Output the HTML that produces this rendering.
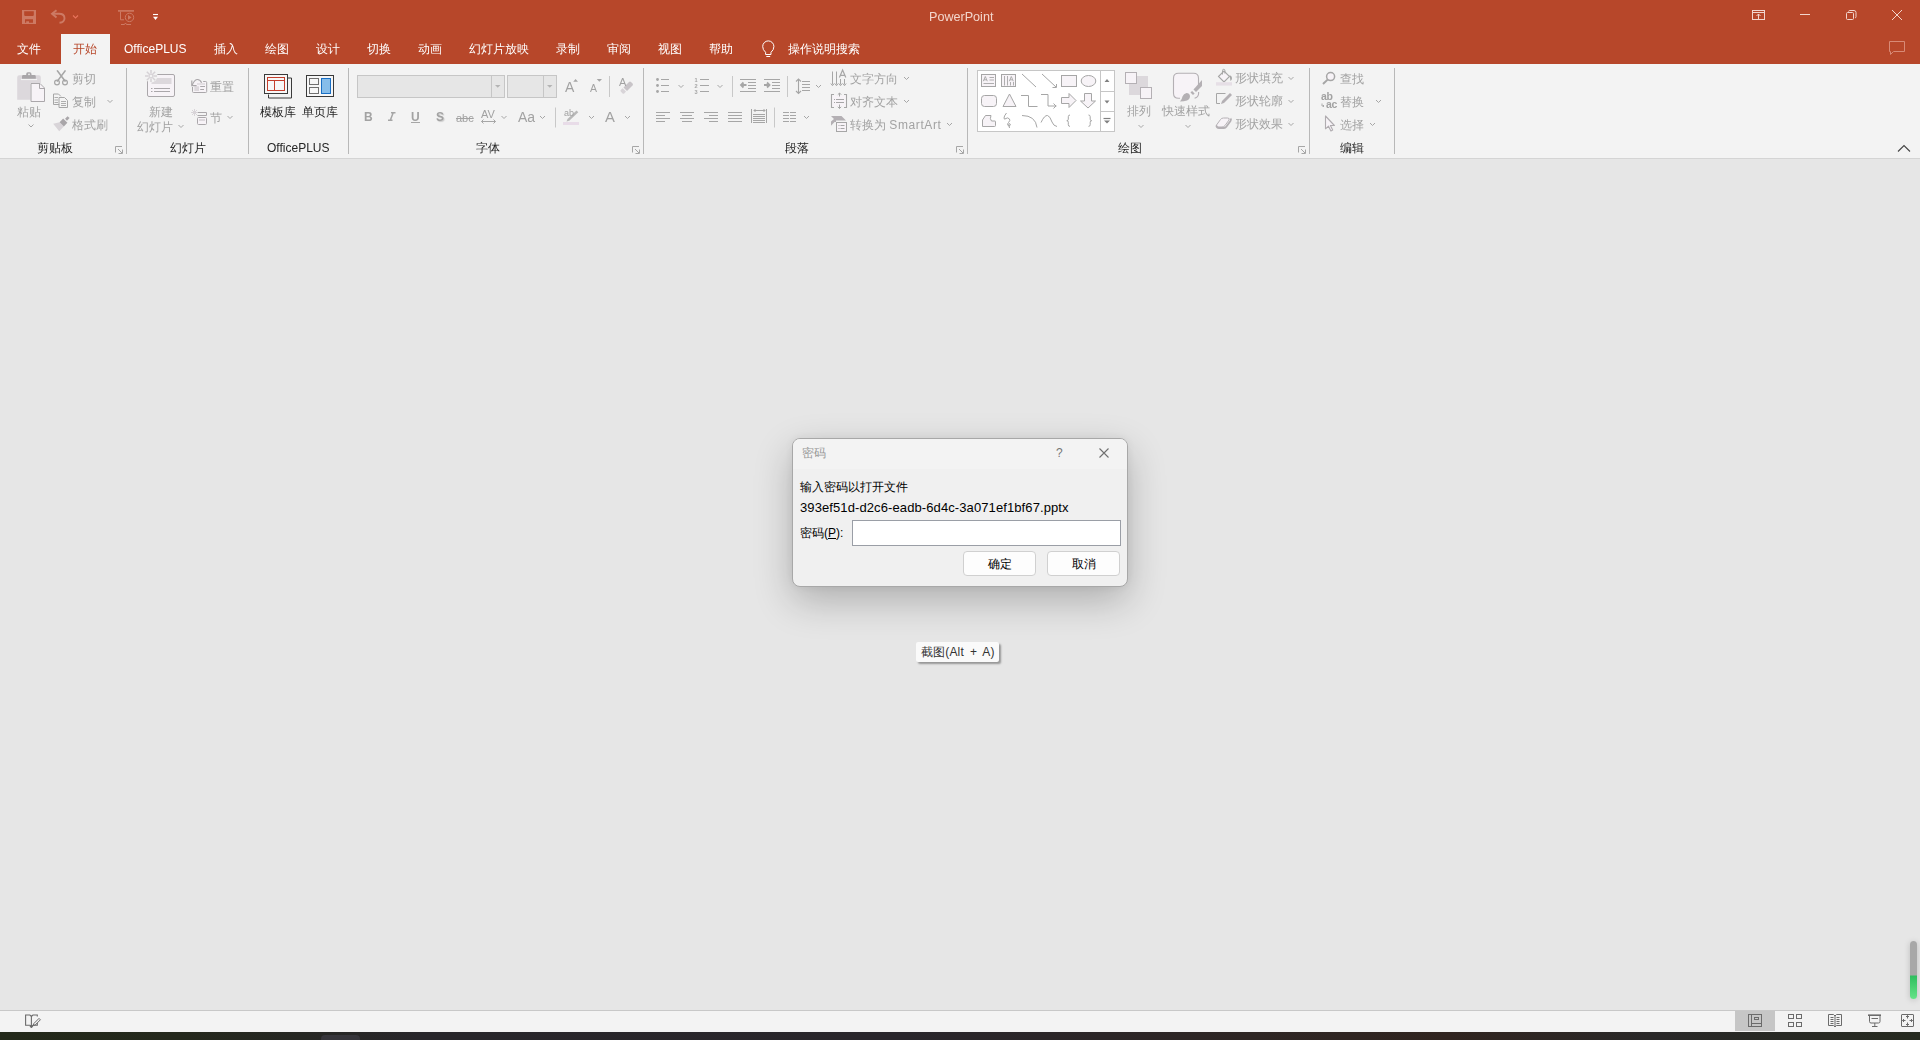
<!DOCTYPE html>
<html><head><meta charset="utf-8">
<style>
*{margin:0;padding:0;box-sizing:border-box}
html,body{width:1920px;height:1040px;overflow:hidden;background:#e6e6e6;font-family:"Liberation Sans",sans-serif;font-size:12px;color:#262626;font-weight:500}
.abs{position:absolute}
#title{left:0;top:0;width:1920px;height:64px;background:#b7472a}
#ribbon{left:0;top:64px;width:1920px;height:95px;background:#f3f3f3;border-bottom:1px solid #d4d4d4}
#status{left:0;top:1010px;width:1920px;height:22px;background:#f3f3f3;border-top:1px solid #c8c8c8}
#taskbar{left:0;top:1032px;width:1920px;height:8px;background:linear-gradient(90deg,#23291a 0,#24281c 180px,#28262a 420px,#29262b 900px,#2e2624 1250px,#30241f 1450px,#292828 1650px,#262a20 1920px)}
.tab{position:absolute;top:34px;height:30px;line-height:30px;color:#fff;font-size:12px;white-space:nowrap}
.t{position:absolute;white-space:nowrap}
.sep{position:absolute;top:68px;width:1px;height:86px;background:#b8b8b8}
.glabel{position:absolute;top:140px;height:16px;line-height:16px;font-size:12px;color:#262626;white-space:nowrap}
.dis{color:#a2a2a2}
.tab,.glabel,.t{will-change:transform}
.dlg .t{will-change:auto}
</style></head><body>
<div id="title" class="abs"></div>
<div class="t" style="left:929px;top:9px;color:#f3d6cc;font-size:12.6px;line-height:16px">PowerPoint</div>
<!-- QAT -->
<svg class="abs" style="left:0;top:0" width="170" height="32">
 <g fill="none" stroke="#d9917f" stroke-linecap="butt">
  <path d="M22 10 h14 v14 h-14 z M24.2 11.3 h9.6 v4 l-.8 .8 h-8 l-.8 -.8 z M25 19.2 h8 v3.5 h-4 v-1.5 h-2.8 v1.5 h-1.2 z" fill="#cd7a64" fill-rule="evenodd" stroke="none"/>
  <path d="M52.5 13.8 h6.5 q5.5 0 5.5 4.5 q0 4 -5 4.5" stroke="#cd7a64" stroke-width="1.9"/>
  <path d="M56.5 10.2 l-4.5 3.6 l4.5 3.8" stroke="#cd7a64" stroke-width="1.9"/>
  <path d="M73 15.5 l2.5 2.5 l2.5 -2.5" stroke="#e8745c" stroke-width="1.1"/>
  <path d="M118 10.9 h16" stroke="#cd7a64" stroke-width="1.6"/>
  <path d="M120.5 11.5 v8.3 h3.5 M121 24.5 h3.5 M126.5 24.5 h4.5 M124.5 24.5 l1 -1.5 l1 1.5" stroke="#cd7a64" stroke-width="1"/>
  <circle cx="129.5" cy="17.4" r="4.2" stroke="#cd7a64" stroke-width="1"/>
  <path d="M128 15 v4.8 l3.6 -2.4 z" fill="#cd7a64" stroke="none"/>
 </g>
 <path d="M153 14.5 h5" stroke="#fff" stroke-width="1.1"/>
 <path d="M153 16.8 h5 l-2.5 3.2 z" fill="#fff"/>
</svg>
<!-- window controls -->
<svg class="abs" style="left:1740px;top:0" width="180" height="64" viewBox="1740 0 180 64">
 <g fill="none" stroke="#f2d5cd" stroke-width="1">
  <rect x="1752.5" y="10.5" width="12" height="9"/>
  <path d="M1753 12.5 h11 M1758.5 19 v-5 M1756.5 16 l2 -2 l2 2"/>
  <path d="M1800 14.5 h10"/>
  <rect x="1846.5" y="12.5" width="7" height="7" rx="1"/><path d="M1848.5 11.5 q.2 -1 1.3 -1 h4.2 q2 0 2 2 v4.2 q0 1.1 -1 1.3"/>
  <path d="M1892 10 l10 10 M1902 10 l-10 10"/>
  <path d="M1889.5 41.5 h15 v10 h-11 l-3 3 v-3 h-1 z" stroke="#d88a76"/>
 </g>
</svg>
<!-- tabs -->
<div class="tab" style="left:17px">文件</div>
<div class="abs" style="left:61px;top:34px;width:49px;height:30px;background:#f3f3f3"></div>
<div class="tab" style="left:73px;color:#b7472a">开始</div>
<div class="tab" style="left:124px">OfficePLUS</div>
<div class="tab" style="left:214px">插入</div>
<div class="tab" style="left:265px">绘图</div>
<div class="tab" style="left:316px">设计</div>
<div class="tab" style="left:367px">切换</div>
<div class="tab" style="left:418px">动画</div>
<div class="tab" style="left:469px">幻灯片放映</div>
<div class="tab" style="left:556px">录制</div>
<div class="tab" style="left:607px">审阅</div>
<div class="tab" style="left:658px">视图</div>
<div class="tab" style="left:709px">帮助</div>
<svg class="abs" style="left:760px;top:38px" width="18" height="22" viewBox="760 38 18 22"><g fill="none" stroke="#fff" stroke-width="1"><path d="M765.6 52.3 q-2.9 -2.4 -2.9 -5.8 a5.6 5.6 0 0 1 11.2 0 q0 3.4 -2.9 5.8 v2.2 h-5.4 z"/><path d="M766.3 56.5 h3.9"/></g></svg>
<div class="tab" style="left:788px">操作说明搜索</div>

<div id="ribbon" class="abs"></div>
<div class="sep" style="left:126px"></div>
<div class="sep" style="left:248px"></div>
<div class="sep" style="left:348px"></div>
<div class="sep" style="left:643px"></div>
<div class="sep" style="left:967px"></div>
<div class="sep" style="left:1309px"></div>
<div class="sep" style="left:1394px"></div>
<div class="glabel" style="left:37px">剪贴板</div>
<!-- G1 clipboard -->
<svg class="abs" style="left:0;top:64px" width="127" height="95" viewBox="0 64 127 95">
 <g fill="none" stroke-linecap="square">
  <path d="M17.2 99.7 v-22.5 q0 -2 2 -2 h19.8 q1.8 0 1.8 2 v5.8 h-10 v16.7 z" fill="#dcd8dc"/>
  <path d="M21.5 79.5 h15" stroke="#f3f3f3" stroke-width="1.2"/>
  <path d="M22 78.7 v-2.2 q0 -1.4 1.4 -1.4 h2.8 v-1.2 q0 -1.7 1.7 -1.7 h1.9 q1.7 0 1.7 1.7 v1.2 h2.8 q1.5 0 1.5 1.4 v2.2 z" fill="#a9a6a9"/>
  <rect x="28.2" y="73.6" width="1.6" height="1.5" fill="#f3f3f3"/>
  <path d="M30.5 83 h1 v19.3 h-1 z" fill="#f3f3f3"/>
  <path d="M31.5 83.5 h8.5 l4.5 4.5 v13.5 h-13 z" fill="#f7f3f7" stroke="#aaa7aa" stroke-width="1"/>
  <path d="M39.5 83.5 v5 h5" stroke="#aaa7aa"/>
    <!-- scissors -->
  <path d="M57.5 71 l7.5 10 M65 71 l-7.5 10" stroke="#a6a6a6" stroke-width="1.6"/>
  <circle cx="57" cy="82.5" r="2.4" stroke="#a6a6a6" stroke-width="1.2"/>
  <circle cx="65" cy="82.5" r="2.4" stroke="#a6a6a6" stroke-width="1.2"/>
  <!-- copy -->
  <path d="M59 104.5 h-5.5 v-10.5 h5 l2 2" stroke="#a6a6a6"/>
  <path d="M55 97.5 h2.5 M55 100 h2.5 M55 102.5 h2.5" stroke="#a6a6a6" stroke-width=".9"/>
  <path d="M59.5 97.5 h5 l3 3 v7 h-8 z" stroke="#a6a6a6" fill="#f3f3f3"/>
  <path d="M61.5 101.5 h4 M61.5 103.5 h4 M61.5 105.5 h4" stroke="#a6a6a6" stroke-width=".9"/>
  <!-- brush -->
  <path d="M59.6 122.2 l-6.4 1.6 l6 7.4 l4.6 -4.8 z" fill="#d8d4d8"/>
  <path d="M67.4 122.85 L63.15 118.6 L59.6 122.15 L63.85 126.4 z" fill="#a9a6a9"/>
  <path d="M69.56 118.12 L67.58 116.14 L65.04 118.68 L67.02 120.66 z" fill="#a9a6a9"/>
    <!-- chevrons -->
  <path d="M28.5 124.5 l2.5 2.5 l2.5 -2.5" stroke="#a6a6a6" stroke-linecap="butt"/>
  <path d="M107.5 100 l2.5 2.5 l2.5 -2.5" stroke="#a6a6a6" stroke-linecap="butt"/>
  <!-- launcher -->
  <path d="M115.5 152.5 v-6 h6.5 M118 149 l4 4 M118.5 153.5 h4 v-4" stroke="#a6a6a6" stroke-linecap="butt"/>
 </g>
</svg>
<div class="t dis" style="left:17px;top:104px;line-height:16px">粘贴</div>
<div class="t dis" style="left:72px;top:71px;line-height:16px">剪切</div>
<div class="t dis" style="left:72px;top:94px;line-height:16px">复制</div>
<div class="t dis" style="left:72px;top:117px;line-height:16px">格式刷</div>
<!-- G2 slides -->
<svg class="abs" style="left:127px;top:64px" width="122" height="95" viewBox="127 64 122 95">
 <g fill="none" stroke-linecap="butt">
  <rect x="147.5" y="74.5" width="27" height="22" rx="1.5" fill="#f7f3f7" stroke="#aaa7aa"/>
  <rect x="151.5" y="78" width="20" height="6" fill="#dcd8dc"/>
  <path d="M151 88.5 h1.5 M154 88.5 h16 M151 91.5 h1.5 M154 91.5 h16" stroke="#aaa7aa"/>
  <circle cx="151" cy="76" r="6.5" fill="#f3f3f3"/>
  <g stroke="#d6d2d6" stroke-width="1.5"><path d="M151 70 v3.6 M151 78.4 v3.6 M145 76 h3.6 M153.4 76 h3.6 M146.8 71.8 l2.5 2.5 M152.7 77.7 l2.5 2.5 M155.2 71.8 l-2.5 2.5 M149.3 77.7 l-2.5 2.5"/></g>
  <circle cx="151" cy="76" r="1.9" fill="none" stroke="#d6d2d6" stroke-width="1.1"/>
  <!-- reset -->
  <path d="M193.2 92 h13 v-10.5 h-12.5 v10.5 z" fill="#f7f3f7" stroke="none"/>
  <path d="M192.5 87 v4.5 q0 1 1 1 h12.2 q1 0 1 -1 v-9 q0 -1 -1 -1 h-2.5" stroke="#aaa7aa" stroke-width="1"/>
  <rect x="197" y="83" width="8" height="2" fill="#e3dfe3" stroke="none"/>
  <rect x="194.3" y="86.3" width="4.7" height="4.7" fill="#dcd8dc" stroke="none"/>
  <path d="M200.2 86.5 h4.8 M200.2 89.5 h3.8" stroke="#aaa7aa" stroke-width="1"/>
  <path d="M201.6 82.8 q-1.5 -3.6 -4.6 -3.3 q-2.6 .3 -4.8 5.6" stroke="#aaa7aa" stroke-width="1.2"/>
  <path d="M191.8 80.5 v5.2 h4.8" stroke="#aaa7aa" stroke-width="1.2"/>
  <!-- section -->
  <path d="M197.5 112.5 h9 v3 h-9" stroke="#aaa7aa"/>
  <rect x="197.5" y="117.5" width="9" height="7" rx="1" fill="#f7f3f7" stroke="#aaa7aa"/>
  <rect x="199" y="119" width="6" height="2" fill="#dcd8dc"/>
  <g stroke="#d8d4d8"><path d="M194.5 109 v7 M191 112.5 h7 M192 110 l5 5 M197 110 l-5 5"/></g>
  <path d="M178.5 125 l2.5 2.5 l2.5 -2.5" stroke="#a6a6a6"/>
  <path d="M227.5 116 l2.5 2.5 l2.5 -2.5" stroke="#a6a6a6"/>
 </g>
</svg>
<div class="t dis" style="left:149px;top:104px;line-height:16px">新建</div>
<div class="t dis" style="left:137px;top:119px;line-height:16px">幻灯片</div>
<div class="t dis" style="left:210px;top:79px;line-height:16px">重置</div>
<div class="t dis" style="left:210px;top:110px;line-height:16px;letter-spacing:0">节</div>
<!-- G3 OfficePLUS -->
<svg class="abs" style="left:249px;top:64px" width="99" height="95" viewBox="249 64 99 95">
 <g fill="none" stroke-linecap="butt">
  <path d="M268.5 94.5 v3.5 h23 v-20 h-3.5" stroke="#3a3a3a"/>
  <rect x="264.5" y="74.5" width="23" height="19" fill="#f7f7f7" stroke="#3a3a3a"/>
  <rect x="267.5" y="77.5" width="17" height="13" fill="#f7f7f7" stroke="#c43e2c"/>
  <path d="M267.5 80.5 h17 M274.5 80.5 v10" stroke="#c43e2c"/>
  <rect x="306.5" y="75.5" width="27" height="21" fill="#f7f7f7" stroke="#3a3a3a"/>
  <rect x="309.5" y="78.5" width="9" height="6" fill="#f7f7f7" stroke="#707070"/>
  <rect x="309.5" y="87.5" width="9" height="6" fill="#f7f7f7" stroke="#707070"/>
  <rect x="321.5" y="78.5" width="9" height="15" fill="#86bdea" stroke="#1a6fc4"/>
 </g>
</svg>
<div class="t" style="left:260px;top:104px;line-height:16px">模板库</div>
<div class="t" style="left:302px;top:104px;line-height:16px">单页库</div>
<div class="glabel" style="left:170px">幻灯片</div>
<div class="glabel" style="left:267px">OfficePLUS</div>
<div class="glabel" style="left:476px">字体</div>
<!-- G4 font -->
<svg class="abs" style="left:349px;top:64px" width="294" height="95" viewBox="349 64 294 95">
 <g fill="none" stroke-linecap="butt">
  <rect x="357.5" y="75.5" width="147" height="22" fill="#e6e6e6" stroke="#c6c6c6"/>
  <path d="M491.5 76 v21" stroke="#c6c6c6"/>
  <path d="M495 85 h5.5 l-2.75 2.75 z" fill="#b4b4b4"/>
  <rect x="507.5" y="75.5" width="49" height="22" fill="#e6e6e6" stroke="#c6c6c6"/>
  <path d="M543.5 76 v21" stroke="#c6c6c6"/>
  <path d="M547 85 h5.5 l-2.75 2.75 z" fill="#b4b4b4"/>
  <path d="M609.5 76 v21" stroke="#c8c8c8"/>
  <path d="M555.5 107.5 v20" stroke="#c8c8c8"/>
  <!-- grow/shrink -->
  <path d="M573.2 81.8 l2.4 -2.8 l2.4 2.8 z M596.7 79 h5.3 l-2.65 2.8 z" fill="#a6a6a6"/>
  <!-- clear formatting -->
  <path d="M623.5 87.5 l5.5 -5.5 q1 -1 2 0 l1.5 1.5 q1 1 0 2 l-5.5 5.5 z" fill="#c8c4c8"/>
  <path d="M620.8 90 l1.8 -1.8 l3.4 3.4 l-1.8 1.8 q-.8 .8 -1.6 0 l-1.8 -1.8 q-.8 -.8 0 -1.6 z" fill="#d8d4d8"/>
  <!-- underline -->
  <path d="M411 122.5 h9" stroke="#a6a6a6"/>
  <!-- AV arrow -->
  <path d="M481.5 121.5 h14 M483.5 119.5 l-2 2 l2 2 M493.5 119.5 l2 2 l-2 2" stroke="#a6a6a6"/>
  <!-- highlight pen -->
  <path d="M566.5 121.5 l1 -2.5 l9 -8.5 l1.8 1.8 l-9 8.5 z" fill="#b8b8b8"/>
  <rect x="563" y="122" width="16" height="3" fill="#e8dce8"/>
  <!-- chevrons -->
  <path d="M501.5 116 l2.5 2.5 l2.5 -2.5 M540 116 l2.5 2.5 l2.5 -2.5 M589 116 l2.5 2.5 l2.5 -2.5 M625 116 l2.5 2.5 l2.5 -2.5" stroke="#a6a6a6"/>
  <path d="M632.5 152.5 v-6 h6.5 M635 149 l4 4 M635.5 153.5 h4 v-4" stroke="#a6a6a6"/>
 </g>
</svg>
<div class="t dis" style="left:565px;top:80px;font-size:14px;line-height:14px">A</div>
<div class="t dis" style="left:590px;top:83px;font-size:10.5px;line-height:11px">A</div>
<div class="t dis" style="left:618.5px;top:77px;font-size:11px;line-height:11px">A</div>
<div class="t dis" style="left:364px;top:110px;font-size:12px;line-height:14px;font-weight:bold">B</div>
<svg class="abs" style="left:386px;top:110px" width="12" height="13" viewBox="386 110 12 13"><path d="M391 112.7 h4.5 M388 120.3 h4.5 M393.2 112.7 l-2.9 7.6" stroke="#a6a6a6" stroke-width="1.5" fill="none"/></svg>
<div class="t dis" style="left:411px;top:110px;font-size:12px;line-height:14px;font-weight:bold">U</div>
<div class="t dis" style="left:436px;top:110px;font-size:12px;line-height:14px;font-weight:bold;text-shadow:1px 1px 1px #ccc">S</div>
<div class="t dis" style="left:456px;top:111px;font-size:11px;line-height:14px;text-decoration:line-through">abc</div>
<div class="t dis" style="left:481px;top:109px;font-size:11px;line-height:11px">AV</div>
<div class="t dis" style="left:518px;top:110px;font-size:14px;line-height:14px">Aa</div>
<div class="t dis" style="left:564px;top:109px;font-size:9px;line-height:9px">ab</div>
<div class="t dis" style="left:605px;top:108.5px;font-size:14.8px;line-height:16px">A</div>
<!-- G5 paragraph -->
<svg class="abs" style="left:644px;top:64px" width="325" height="95" viewBox="644 64 325 95">
 <g fill="none" stroke="#a6a6a6" stroke-linecap="butt">
  <!-- bullets -->
  <circle cx="657.5" cy="79.5" r="1.4" fill="#a6a6a6" stroke="none"/>
  <circle cx="657.5" cy="85.5" r="1.4" fill="#a6a6a6" stroke="none"/>
  <circle cx="657.5" cy="91.5" r="1.4" fill="#a6a6a6" stroke="none"/>
  <path d="M661 79.5 h8 M661 85.5 h8 M661 91.5 h8"/>
  <path d="M678.5 85 l2.5 2.5 l2.5 -2.5 M717.5 85 l2.5 2.5 l2.5 -2.5 M816 85 l2.5 2.5 l2.5 -2.5 M904 77 l2.5 2.5 l2.5 -2.5 M904 100 l2.5 2.5 l2.5 -2.5 M947 123 l2.5 2.5 l2.5 -2.5 M804 116 l2.5 2.5 l2.5 -2.5"/>
  <!-- numbering -->
  <path d="M700 79.5 h9 M700 85.5 h9 M700 91.5 h9"/>
  <text x="694.6" y="81.8" font-size="5.6" font-weight="bold" fill="#a6a6a6" stroke="none" font-family="Liberation Sans">1</text>
  <text x="694.6" y="87.8" font-size="5.6" font-weight="bold" fill="#a6a6a6" stroke="none" font-family="Liberation Sans">2</text>
  <text x="694.6" y="93.8" font-size="5.6" font-weight="bold" fill="#a6a6a6" stroke="none" font-family="Liberation Sans">3</text>
  <path d="M732.5 76 v21 M787.5 76 v21 M774.5 107.5 v20" stroke="#c8c8c8"/>
  <!-- indent -->
  <path d="M740 79.5 h16 M748 82.5 h8 M748 85.5 h8 M748 88.5 h8 M740 91.5 h16"/>
  <path d="M746.5 85 h-5 M743.5 82.5 l-2.5 2.5 l2.5 2.5" stroke-width="1.8"/>
  <path d="M764 79.5 h16 M772 82.5 h8 M772 85.5 h8 M772 88.5 h8 M764 91.5 h16"/>
  <path d="M764 85 h5 M767 82.5 l2.5 2.5 l-2.5 2.5" stroke-width="1.8"/>
  <!-- line spacing -->
  <path d="M802 81.5 h8 M802 84.5 h8 M802 87.5 h8 M802 90.5 h8"/>
  <path d="M798.5 79 v14.5 M796 81.5 l2.5 -2.5 l2.5 2.5 M796 91 l2.5 2.5 l2.5 -2.5" stroke-width="1.1"/>
  <!-- align -->
  <path d="M656 112.5 h14 M656 115.5 h9 M656 118.5 h14 M656 121.5 h9"/>
  <path d="M680 112.5 h14 M682 115.5 h10 M680 118.5 h14 M682 121.5 h10"/>
  <path d="M704 112.5 h14 M709 115.5 h9 M704 118.5 h14 M709 121.5 h9"/>
  <path d="M728 112.5 h14 M728 115.5 h14 M728 118.5 h14 M728 121.5 h14"/>
  <path d="M751.5 109 v14 M766.5 109 v14 M753 114.5 h12 M753 116.5 h12 M753 118.5 h12 M753 120.5 h12 M753 122.5 h12 M754 110.5 h11 M755.5 109 l-1.5 1.5 l1.5 1.5 M763.5 109 l1.5 1.5 l-1.5 1.5"/>
  <!-- columns -->
  <path d="M783 112.5 h6 M783 115.5 h6 M783 118.5 h6 M783 121.5 h6 M790 112.5 h6 M790 115.5 h6 M790 118.5 h6 M790 121.5 h6"/>
  <!-- text direction -->
  <path d="M832.5 71.5 v13 M836.5 71.5 v13 M840.5 79 v5.5 M844.5 79 v5.5" stroke-width="1"/>
  <path d="M830.8 83.5 l1.7 2.2 l1.7 -2.2 M834.8 83.5 l1.7 2.2 l1.7 -2.2 M838.8 83.5 l1.7 2.2 l1.7 -2.2 M842.8 83.5 l1.7 2.2 l1.7 -2.2" stroke-width="1"/>
  <path d="M839.4 77.6 l3.2 -7.6 l3.2 7.6 M840.4 75.3 h4.4" stroke-width="1.2"/>
  <!-- align text -->
  <path d="M834 94.5 h-2.5 v13 h2.5 M844 94.5 h2.5 v13 h-2.5" stroke-width="1.1"/>
  <rect x="832.5" y="95.5" width="13" height="11" fill="#f7f3f7" stroke="none"/>
  <path d="M839.5 93 v3.5 M837.8 94.7 l1.7 -1.7 l1.7 1.7 M839.5 104.5 v4 M837.8 106.8 l1.7 1.7 l1.7 -1.7" stroke-width="1"/>
  <path d="M836 99.5 h8 M836 102.5 h8 M834 99.5 h1 M834 102.5 h1" stroke-width="1"/>
  <!-- smartart -->
  <path d="M831 116 h10.5 l4.5 4.5 h-10 v1.5 h-1.5 l-3.5 3.8 v-4.3 l3 -2.5 z" fill="#b4b0b4" stroke="none"/>
  <rect x="836.5" y="122.5" width="10" height="9" fill="#f7f3f7" stroke="#a6a6a6"/>
  <path d="M838.5 125.5 h1 M840.5 125.5 h4 M838.5 128.5 h1 M840.5 128.5 h4" stroke-width="1"/>
  <path d="M956.5 152.5 v-6 h6.5 M959 149 l4 4 M959.5 153.5 h4 v-4"/>
 </g>
</svg>
<div class="t dis" style="left:850px;top:71px;line-height:16px">文字方向</div>
<div class="t dis" style="left:850px;top:94px;line-height:16px">对齐文本</div>
<div class="t dis" style="left:850px;top:117px;line-height:16px">转换为 <span style="letter-spacing:.6px">SmartArt</span></div>

<div class="glabel" style="left:785px">段落</div>
<div class="glabel" style="left:1118px">绘图</div>
<!-- G6 drawing -->
<svg class="abs" style="left:968px;top:64px" width="342" height="95" viewBox="968 64 342 95">
 <g fill="none" stroke="#a6a6a6" stroke-linecap="butt">
  <rect x="977.5" y="70.5" width="137" height="61" fill="#fff" stroke="#c6c6c6"/>
  <path d="M1100.5 71 v60 M1101 91.5 h13 M1101 111.5 h13" stroke="#c6c6c6"/>
  <path d="M1104.5 82 l2.5 -3 l2.5 3 z M1104.5 100.5 h5 l-2.5 3 z M1104 120.5 h6 l-3 3 z" fill="#808080" stroke="none"/>
  <path d="M1103.5 118.5 h7" stroke="#808080" stroke-width="1.2"/>
  <!-- row1 -->
  <rect x="981.5" y="74.5" width="14" height="12" fill="#f7f3f7"/>
  <path d="M983.3 81.2 l2 -4.7 l2 4.7 M984 79.8 h2.6 M989.5 77.5 h4.5 M989.5 80 h4.5 M983.5 83.5 h10.5" stroke-width=".9"/>
  <rect x="1001.5" y="74.5" width="14" height="12" fill="#f7f3f7"/>
  <path d="M1004.5 76 v9.5 M1007.5 76 v9.5 M1009.3 81.2 l2 -4.7 l2 4.7 M1010 79.8 h2.6 M1010.5 82 v3.5 M1013.5 82 v3.5" stroke-width=".9"/>
  <path d="M1022 74 l14 13"/>
  <path d="M1042 74 l14 13 M1056.5 84 v3.5 h-4"/>
  <rect x="1061.5" y="75.5" width="15" height="11" fill="#f7f3f7"/>
  <ellipse cx="1088.5" cy="81" rx="7.3" ry="5.5" fill="#f7f3f7"/>
  <!-- row2 -->
  <rect x="981.5" y="95.5" width="15" height="11" rx="3" fill="#f7f3f7"/>
  <path d="M1009.5 94 l6.5 12.5 h-13 z" fill="#f7f3f7"/>
  <path d="M1021 95.5 h7.5 v11 h9"/>
  <path d="M1041 94.5 h7 v11.5 h8.5 M1053.5 103.5 l2.5 2.5 l-2.5 2.5"/>
  <path d="M1061.5 97.5 h7.5 v-4 l7 7 l-7 7 v-4 h-7.5 z" fill="#f7f3f7"/>
  <path d="M1084.5 93.5 h7 v7.5 h4 l-7.5 7 l-7.5 -7 h4 z" fill="#f7f3f7"/>
  <!-- row3 -->
  <path d="M982.5 126.5 v-6.5 l3 -4.5 h5.5 q-1.5 3.5 .5 5.5 h3.5 q.5 0 .5 .5 v4 q0 1 -1 1 z" fill="#f7f3f7"/>
  <path d="M1006.5 113 q-2.5 3 -2.5 5 q0 2 2 .5 q1.5 -1.5 3.5 .5 q1 1.5 -1 3.5 q-1.5 1.5 -.5 3 q1 1 2 0 q1 -1.5 -.5 -2 q-1 0 -.5 2 l.5 2.5"/>
  <path d="M1022 115.5 q13.5 0 15 12"/>
  <path d="M1041 122.5 q3.5 -7.5 6.5 -7 q2.5 .5 4.5 6.5 q1.5 4 5 4.5"/>
  <path d="M1070 115 q-1.7 0 -1.7 1.7 v2.5 q0 1.5 -1.5 1.5 q1.5 0 1.5 1.5 v2.5 q0 1.7 1.7 1.7"/>
  <path d="M1088.5 115 q1.7 0 1.7 1.7 v2.5 q0 1.5 1.5 1.5 q-1.5 0 -1.5 1.5 v2.5 q0 1.7 -1.7 1.7"/>
  <!-- arrange -->
  <rect x="1129" y="76" width="19" height="19" fill="#dcd8dc" stroke="none"/>
  <rect x="1125.5" y="72.5" width="11" height="11" fill="#f7f3f7" stroke="#b4b0b4"/>
  <rect x="1140.5" y="87.5" width="11" height="11" fill="#f7f3f7" stroke="#b4b0b4"/>
  <!-- quick styles -->
  <path d="M1180 98.3 h-1.5 q-5 0 -5 -5 v-15 q0 -5 5 -5 h15 q5 0 5 5 v7.5 M1198.6 92 v1.2 q0 4 -4 5" fill="#f7f3f7" stroke="#b4b0b4" stroke-width="1.1"/>
  <path d="M1183.5 91.5 h6 v6 h-6 z" fill="#f7f3f7" stroke="none"/>
  <path d="M1180 101.5 q2 -2 2.5 -5 q1 -3 4 -3.5 q3 0 3.5 3 q0 3 -3 4.5 q-3 1 -7 1 z" fill="#b4b0b4" stroke="none"/>
  <path d="M1190.5 92.5 l2.5 2.5 l1.6 -1.6 l-2.5 -2.5 z" fill="#b4b0b4" stroke="none"/>
  <path d="M1193.5 89.5 l2.5 2.5 l6 -6 v-6 z" fill="#b4b0b4" stroke="none"/>
  <!-- fill -->
  <path d="M1218.5 76.5 l5.5 -5.5 l5.5 5.5 l-5.5 5.5 z" fill="#f7f3f7" stroke="#a6a6a6" stroke-width="1.1"/>
  <path d="M1222.5 74.5 v-4 q0 -1.2 1.2 -1.2 q1.2 0 1.2 1.2 v3" stroke="#a6a6a6" stroke-width="1"/>
  <path d="M1229.5 75 q2.5 1 2.5 3 q0 2 -1.5 3 z" fill="#a6a6a6" stroke="none"/>
  <rect x="1216" y="82.2" width="16" height="3.4" fill="#e6dfe6" stroke="none"/>
  <!-- outline -->
  <path d="M1225.5 93.5 h-9 v10 h3.5" stroke="#a6a6a6"/>
  <path d="M1221 104 l1 -3 l8 -8 l2 2 l-8 8 z" fill="#b4b0b4" stroke="none"/>
  <!-- effects -->
  <path d="M1216.5 125 l4 -5.5 q1 -1.5 3 -1.5 h4 q2.5 0 1.5 2 l-4 5.5 q-1 1.5 -3 1.5 h-4 q-2.5 0 -1.5 -2 z" fill="#f7f3f7" stroke="#b4b0b4" stroke-width="1"/>
  <path d="M1216.5 125.5 q0 2.5 2.5 2.5 h5 q1.5 0 2.5 -1.5 l4 -5.5 q1 -1.5 0 -2.5" fill="none" stroke="#b4b0b4" stroke-width="1.8"/>
  <!-- chevrons -->
  <path d="M1138.5 125 l2.5 2.5 l2.5 -2.5 M1185.5 125 l2.5 2.5 l2.5 -2.5 M1288.5 77 l2.5 2.5 l2.5 -2.5 M1288.5 100 l2.5 2.5 l2.5 -2.5 M1288.5 123 l2.5 2.5 l2.5 -2.5"/>
  <path d="M1298.5 152.5 v-6 h6.5 M1301 149 l4 4 M1301.5 153.5 h4 v-4"/>
 </g>
</svg>
<div class="t dis" style="left:1127px;top:103px;line-height:16px">排列</div>
<div class="t dis" style="left:1162px;top:103px;line-height:16px">快速样式</div>
<div class="t dis" style="left:1235px;top:70px;line-height:16px">形状填充</div>
<div class="t dis" style="left:1235px;top:93px;line-height:16px">形状轮廓</div>
<div class="t dis" style="left:1235px;top:116px;line-height:16px">形状效果</div>
<!-- G7 editing -->
<svg class="abs" style="left:1310px;top:64px" width="84" height="95" viewBox="1310 64 84 95">
 <g fill="none" stroke="#a6a6a6" stroke-linecap="butt">
  <circle cx="1330.6" cy="76.6" r="4" stroke-width="1.5" fill="#f7f3f7"/>
  <path d="M1327.6 79.6 l-4.6 4.4" stroke-width="2"/>
  <path d="M1325.5 116 v12.8 l3 -2.6 l2.4 4.8 l1.8 -.9 l-2.3 -4.6 h4 z" fill="#f7f3f7" stroke="#b0acb0" stroke-width="1.1" stroke-linejoin="round"/>
  <path d="M1376 100 l2.5 2.5 l2.5 -2.5 M1370 123 l2.5 2.5 l2.5 -2.5"/>
  <path d="M1322 103.5 v2.5 h2 M1323 105 l1 1 l-1 1" stroke-width=".9"/>
 </g>
</svg>
<div class="t dis" style="left:1321px;top:91px;font-size:10.5px;line-height:10px;font-weight:bold;letter-spacing:-.3px">ab</div>
<div class="t dis" style="left:1326px;top:99px;font-size:10.5px;line-height:10px;font-weight:bold;letter-spacing:-.3px">ac</div>
<div class="t dis" style="left:1340px;top:71px;line-height:16px">查找</div>
<div class="t dis" style="left:1340px;top:94px;line-height:16px">替换</div>
<div class="t dis" style="left:1340px;top:117px;line-height:16px">选择</div>
<svg class="abs" style="left:1896px;top:142px" width="16" height="12"><path d="M2 9.5 l6 -6 l6 6" fill="none" stroke="#444" stroke-width="1.1"/></svg>

<div class="glabel" style="left:1340px">编辑</div>

<div id="status" class="abs"></div>
<div id="taskbar" class="abs"></div>
<div class="abs" style="left:321px;top:1035px;width:39px;height:5px;background:#36353a;border-radius:4px 4px 0 0"></div>
<svg class="abs" style="left:0;top:1011px" width="1920" height="20" viewBox="0 0 1920 20">
 <g fill="none" stroke="#6b6b6b" stroke-width="1">
  <g transform="translate(0,1)"><path d="M31.4 14.5 l-1.5 -1.3 h-4.3 v-10.2 h4.3 l1.5 1.5 l1.5 -1.5 h4.4 v1.5 M37.3 11 v2.2 h-4.4 l-1.5 1.3 M31.4 4.5 v10.5" stroke-width="1.1"/>
  <path d="M30 14.3 l1.4 1.6 l1.4 -1.6 z" fill="#6b6b6b"/>
  <path d="M33.8 11.6 l5.2 -5.2 l1.4 1.4 l-5.2 5.2 l-1.9 .5 z" stroke-width="1"/></g>
 </g>
 <rect x="1735" y="0" width="40" height="20" fill="#c6c6c6"/>
 <g fill="none" stroke="#6b6b6b" stroke-width="1">
  <rect x="1748.5" y="3.5" width="13" height="12"/>
  <path d="M1751.5 4 v11 M1752 12.5 h9"/>
  <rect x="1754.5" y="6.5" width="4" height="2"/>
  <rect x="1788.5" y="3.5" width="5" height="4"/><rect x="1796.5" y="3.5" width="5" height="4"/>
  <rect x="1788.5" y="11.5" width="5" height="4"/><rect x="1796.5" y="11.5" width="5" height="4"/>
  <path d="M1828.5 3.5 h5 l1.5 1.5 l1.5 -1.5 h5 v11 h-5 l-1.5 1.5 l-1.5 -1.5 h-5 z M1835 5 v11 M1830.5 6.5 h3 M1830.5 8.5 h3 M1830.5 10.5 h3 M1830.5 12.5 h3 M1836.5 6.5 h3 M1836.5 8.5 h3 M1836.5 10.5 h3 M1836.5 12.5 h3"/>
  <path d="M1868 4.2 h13" stroke-width="1.6"/>
  <path d="M1869.5 4.5 v6 q0 1.5 1.5 1.5 h7.5 q1.5 0 1.5 -1.5 v-6 M1871.5 7.5 h6.5 M1874.8 12 v3.5 M1872 15.5 h5.5"/>
  <rect x="1901.5" y="3.5" width="12" height="12" rx=".5"/>
  <path d="M1907.5 4.5 v3 M1906 6 l1.5 -1.5 l1.5 1.5 M1907.5 11.5 v3 M1906 13 l1.5 1.5 l1.5 -1.5 M1902.5 9.5 h3 M1904 8 l-1.5 1.5 l1.5 1.5 M1909.5 9.5 h3 M1911 8 l1.5 1.5 l-1.5 1.5"/>
 </g>
</svg>
<div class="abs" style="left:1910px;top:941px;width:7px;height:58px;border-radius:4px;background:linear-gradient(#a8a8a8 0,#a8a8a8 34px,#2fbf5f 35px,#69e48a 59px);box-shadow:0 1px 6px rgba(0,0,0,.18)"></div>


<!-- dialog -->
<div class="abs dlg" style="left:792px;top:438px;width:336px;height:149px;border:1px solid #a8a8a8;border-radius:8px;background:#f0f0f0;box-shadow:0 14px 38px rgba(0,0,0,.24),0 0 8px rgba(0,0,0,.06);overflow:hidden">
  <div class="abs" style="left:0;top:0;width:100%;height:30px;background:#f3f3f3"></div>
  <div class="t" style="left:9px;top:6px;color:#999;line-height:16px">密码</div>
  <svg class="abs" style="left:0;top:0" width="335" height="30" viewBox="793 439 335 30"><path d="M1099.5 448.5 l9 9 M1108.5 448.5 l-9 9" stroke="#707070" stroke-width="1.1" fill="none"/></svg>
  <div class="t" style="left:263px;top:6px;color:#777;font-size:12px;line-height:16px">?</div>
  <div class="t" style="left:7px;top:40px;color:#000;line-height:16px">输入密码以打开文件</div>
  <div class="t" style="left:7px;top:61px;color:#000;line-height:16px;font-size:13px;letter-spacing:0.1px">393ef51d-d2c6-eadb-6d4c-3a071ef1bf67.pptx</div>
  <div class="t" style="left:7px;top:86px;color:#000;line-height:16px">密码(<u>P</u>):</div>
  <div class="abs" style="left:59px;top:81px;width:269px;height:26px;background:#fff;border:1px solid #9a9ea6"></div>
  <div class="abs" style="left:170px;top:112px;width:73px;height:25px;background:#fdfdfd;border:1px solid #d0d0d0;border-radius:4px;text-align:center;line-height:25px;color:#000">确定</div>
  <div class="abs" style="left:254px;top:112px;width:73px;height:25px;background:#fdfdfd;border:1px solid #d0d0d0;border-radius:4px;text-align:center;line-height:25px;color:#000">取消</div>
</div>
<div class="abs" style="left:916px;top:642px;width:83px;height:20px;background:#fafafa;border-radius:2px;box-shadow:2px 2px 2px rgba(0,0,0,.35);line-height:20px;padding-left:5px;color:#333;word-spacing:2.5px;letter-spacing:.15px">截图(Alt + A)</div>
</body></html>
